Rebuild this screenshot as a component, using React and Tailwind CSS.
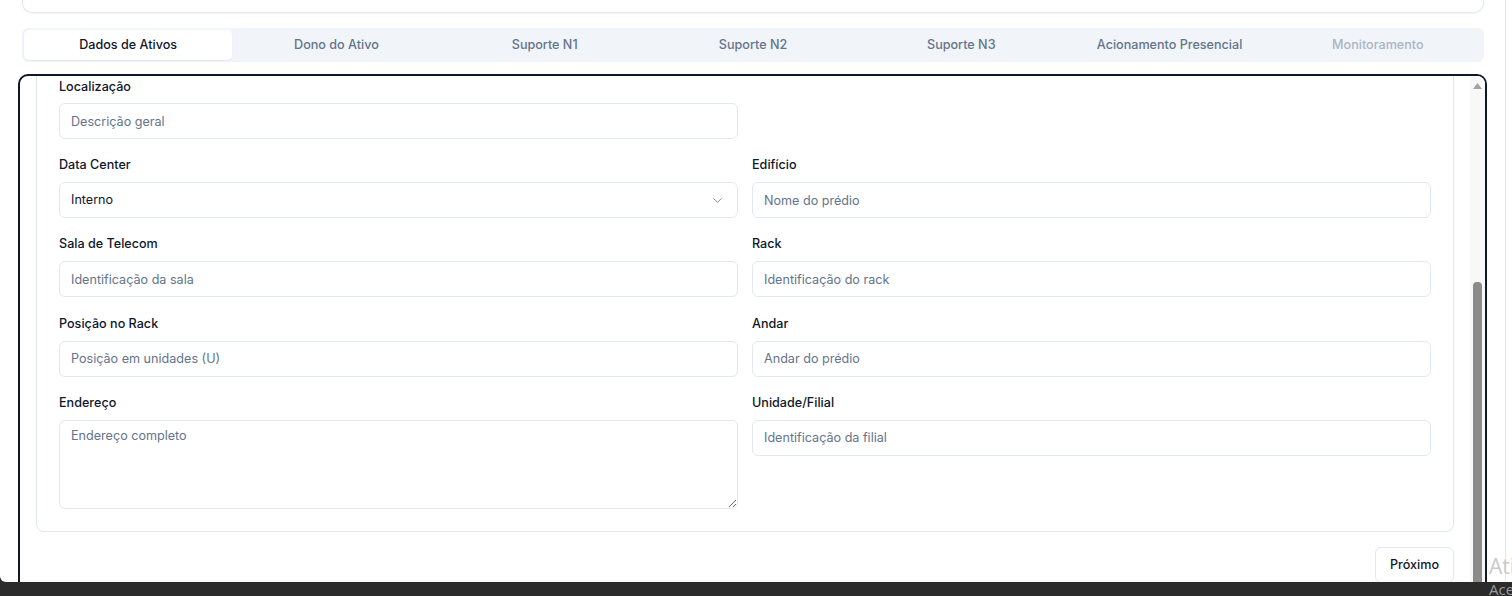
import React from "react";
import { ChevronDown } from "lucide-react";

const labelCls = "block h-5 pt-px leading-[20px] text-[12.6px] font-medium text-[#0f172a]";
const inputCls =
  "mt-2 h-9 w-full rounded-md border border-[#e2e8f0] bg-white pl-[11px] pr-3 text-[12.6px] text-[#0f172a] placeholder:text-[#64748b] outline-none";

function Field({ label, placeholder }) {
  return (
    <div className="flex flex-col">
      <label className={labelCls}>{label}</label>
      <input className={inputCls} placeholder={placeholder} />
    </div>
  );
}

const tabs = [
  { t: "Dados de Ativos", active: true },
  { t: "Dono do Ativo" },
  { t: "Suporte N1" },
  { t: "Suporte N2" },
  { t: "Suporte N3" },
  { t: "Acionamento Presencial" },
  { t: "Monitoramento", disabled: true },
];

export default function App() {
  return (
    <div
      className="relative w-[1512px] h-[596px] overflow-hidden bg-[#2b2b2b]"
      style={{ fontFamily: "Inter, 'Noto Sans', sans-serif" }}
    >
      <div className="h-[582px] w-[1512px] overflow-hidden rounded-bl-[6px] bg-white">
        <div className="flex h-full">
          <div className="w-[1506px] shrink-0 border-r border-[#e5e7eb] h-full">
            {/* top card stub */}
            <div className="ml-[22px] w-[1462px] h-[13px] rounded-b-[10px] border-x border-b border-[#e2e8f0] bg-white shadow-[0_1px_2px_rgba(0,0,0,0.04)]" />
            {/* tabs */}
            <div className="ml-[22px] mt-[15px] w-[1462px] h-[34px] rounded-md bg-[#f1f5f9] p-[2px] grid grid-cols-7">
              {tabs.map((tab) => (
                <div
                  key={tab.t}
                  className={
                    "flex items-center justify-center rounded-[5px] text-[12.6px] font-medium " +
                    (tab.active
                      ? "bg-white text-[#0f172a] shadow-[0_1px_2px_rgba(0,0,0,0.06)]"
                      : tab.disabled
                      ? "text-[#64748b] opacity-50"
                      : "text-[#64748b]")
                  }
                >
                  {tab.t}
                </div>
              ))}
            </div>
            {/* scroll box */}
            <div className="ml-[18px] mt-3 w-[1469px] h-[530px] rounded-[10px] border-2 border-[#0f172a] flex overflow-hidden">
              <div className="flex-1 px-4">
                <div className="rounded-b-lg border-x border-b border-[#e2e8f0] px-[22px] pb-[22px]">
                  <div className="grid grid-cols-2 gap-x-[14px]">
                    <div className="flex flex-col">
                      <label className={labelCls}>Localização</label>
                      <input
                        className={inputCls.replace("mt-2", "mt-[7px]")}
                        placeholder="Descrição geral"
                      />
                    </div>
                  </div>
                  <div className="mt-[15px] grid grid-cols-2 gap-x-[14px] gap-y-[15.34px]">
                    <div className="flex flex-col">
                      <label className={labelCls}>Data Center</label>
                      <div className="mt-2 h-9 w-full rounded-md border border-[#e2e8f0] bg-white pl-[11px] pr-3 flex items-center justify-between text-[12.6px] text-[#0f172a]">
                        <span>Interno</span>
                        <ChevronDown size={15} strokeWidth={1.6} className="text-[#0f172a] opacity-50" />
                      </div>
                    </div>
                    <Field label="Edifício" placeholder="Nome do prédio" />
                    <Field label="Sala de Telecom" placeholder="Identificação da sala" />
                    <Field label="Rack" placeholder="Identificação do rack" />
                    <Field label="Posição no Rack" placeholder="Posição em unidades (U)" />
                    <Field label="Andar" placeholder="Andar do prédio" />
                    <div className="flex flex-col">
                      <label className={labelCls}>Endereço</label>
                      <textarea
                        className="mt-2 h-[89px] w-full rounded-md border border-[#e2e8f0] bg-white pl-[11px] pr-3 pt-[7px] leading-4 text-[12.6px] text-[#0f172a] placeholder:text-[#64748b] outline-none resize-y"
                        placeholder="Endereço completo"
                      />
                    </div>
                    <Field label="Unidade/Filial" placeholder="Identificação da filial" />
                  </div>
                </div>
                <div className="mt-[15px] flex justify-end">
                  <button className="h-9 w-[79px] rounded-md border border-[#e2e8f0] bg-white text-[12.6px] font-medium text-[#0f172a]">
                    Próximo
                  </button>
                </div>
              </div>
              {/* scrollbar */}
              <div className="w-[15px] shrink-0 bg-[#f8f8f8] flex flex-col items-center">
                <div className="h-[17px] w-full flex items-start justify-center pt-[7px]">
                  <svg width="9" height="6" viewBox="0 0 9 6">
                    <path d="M4.5 0 L9 6 L0 6 Z" fill="#a3a3a3" />
                  </svg>
                </div>
                <div className="mt-[189px] w-[9px] flex-1 rounded-t-[4px] bg-[#8b8b8b]" />
              </div>
            </div>
          </div>
        </div>
      </div>
      {/* Windows watermark */}
      <div
        className="absolute left-[1489px] top-[556px] whitespace-nowrap leading-none"
        style={{ fontFamily: "'Open Sans', 'Noto Sans', sans-serif" }}
      >
        <div className="text-[21px] text-[#c9c9c9]">Ativar o Windows</div>
        <div className="mt-[5px] text-[15px] text-[#9a9a9a]">Acesse Configurações para ativar o Windows.</div>
      </div>
    </div>
  );
}
